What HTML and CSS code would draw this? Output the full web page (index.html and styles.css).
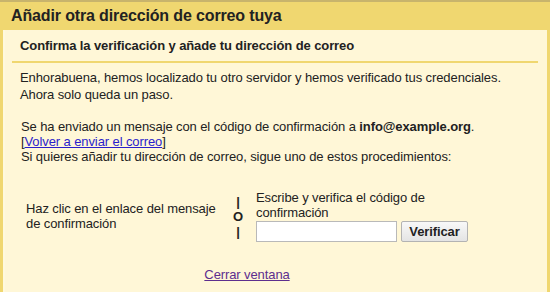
FILE: index.html
```html
<!DOCTYPE html>
<html lang="es">
<head>
<meta charset="utf-8">
<title>Añadir otra dirección de correo tuya</title>
<link rel="stylesheet" href="styles.css">
</head>
<body>
<div class="dialog">
  <div class="title">Añadir otra dirección de correo tuya</div>
  <div class="panel">
    <div class="subhead">Confirma la verificación y añade tu dirección de correo</div>
    <div class="rule"></div>
    <p class="intro">Enhorabuena, hemos localizado tu otro servidor y hemos verificado tus credenciales.<br>Ahora solo queda un paso.</p>
    <div class="info">
      Se ha enviado un mensaje con el código de confirmación a <b>info@example.org</b>.<br>
      [<a href="#" class="link">Volver a enviar el correo</a>]<br>
      Si quieres añadir tu dirección de correo, sigue uno de estos procedimientos:
    </div>
    <div class="choices-wrap">
      <div class="choices">
        <div class="opt-left">Haz clic en el enlace del mensaje de confirmación</div>
        <div class="sep"><span class="bar">|</span><span class="o">O</span><span class="bar">|</span></div>
        <div class="opt-right">
          <div class="code-label">Escribe y verifica el código de confirmación</div>
          <div class="code-row">
            <input type="text" class="code-input">
            <button class="verify">Verificar</button>
          </div>
        </div>
      </div>
      <div class="close"><a href="#" class="visited">Cerrar ventana</a></div>
    </div>
  </div>
</div>
</body>
</html>
```
FILE: styles.css
```css
html, body {
  margin: 0;
  padding: 0;
  background: #fff7d7;
}
body {
  font-family: "Liberation Sans", Arial, sans-serif;
  font-size: 13px;
  letter-spacing: -0.1px;
  color: #222;
}
.dialog {
  width: 550px;
  height: 292px;
  box-sizing: border-box;
  border-top: 2px solid #c8b46c;
  background: #f0d770;
  padding: 0 3px;
  display: flex;
  flex-direction: column;
}
.title {
  height: 28px;
  line-height: 28px;
  font-size: 16px;
  letter-spacing: -0.14px;
  font-weight: bold;
  color: #222;
  padding-left: 8px;
}
.panel {
  flex: 1;
  background: #fff7d7;
  border-left: 2px solid #fff9dd;
  padding: 0 9px 0 7px;
}
.subhead {
  font-weight: bold;
  padding: 8px 0 0 8px;
  height: 23px;
}
.rule {
  height: 2px;
  background: #f0d770;
}
.intro {
  margin: 0;
  padding: 6px 0 0 8px;
  line-height: 17px;
}
.info {
  padding: 16px 0 0 9px;
  line-height: 15px;
}
.choices-wrap {
  width: 442px;
  margin-left: 14px;
}
.choices {
  display: flex;
  align-items: center;
  margin-top: 26px;
}
.opt-left {
  flex: none;
  width: 200px;
  line-height: 15px;
}
.sep {
  flex: none;
  display: flex;
  flex-direction: column;
  align-items: center;
  width: 20px;
  margin-left: 2px;
  font-weight: bold;
  line-height: 15px;
}
.opt-right {
  flex: none;
  margin-left: 8px;
  width: 212px;
}
.code-label {
  line-height: 15px;
}
.code-row {
  display: flex;
  gap: 4px;
  margin-top: 1px;
}
.code-input {
  flex: none;
  width: 141px;
  height: 21px;
  box-sizing: border-box;
  border: 1px solid #b9b9b9;
  background: #fff;
  margin: 0;
  padding: 0;
}
.verify {
  flex: none;
  width: 67px;
  height: 21px;
  box-sizing: border-box;
  padding: 0;
  border: 1px solid #b3b3b3;
  border-radius: 2px;
  background: linear-gradient(#f8f8f8, #e4e4e4);
  font-family: "Liberation Sans", Arial, sans-serif;
  font-size: 13px;
  letter-spacing: -0.1px;
  font-weight: bold;
  color: #222;
}
.close {
  text-align: center;
  margin-top: 25px;
}
.link {
  color: #2a1ecc;
}
.visited {
  color: #5d2e8e;
}
```
